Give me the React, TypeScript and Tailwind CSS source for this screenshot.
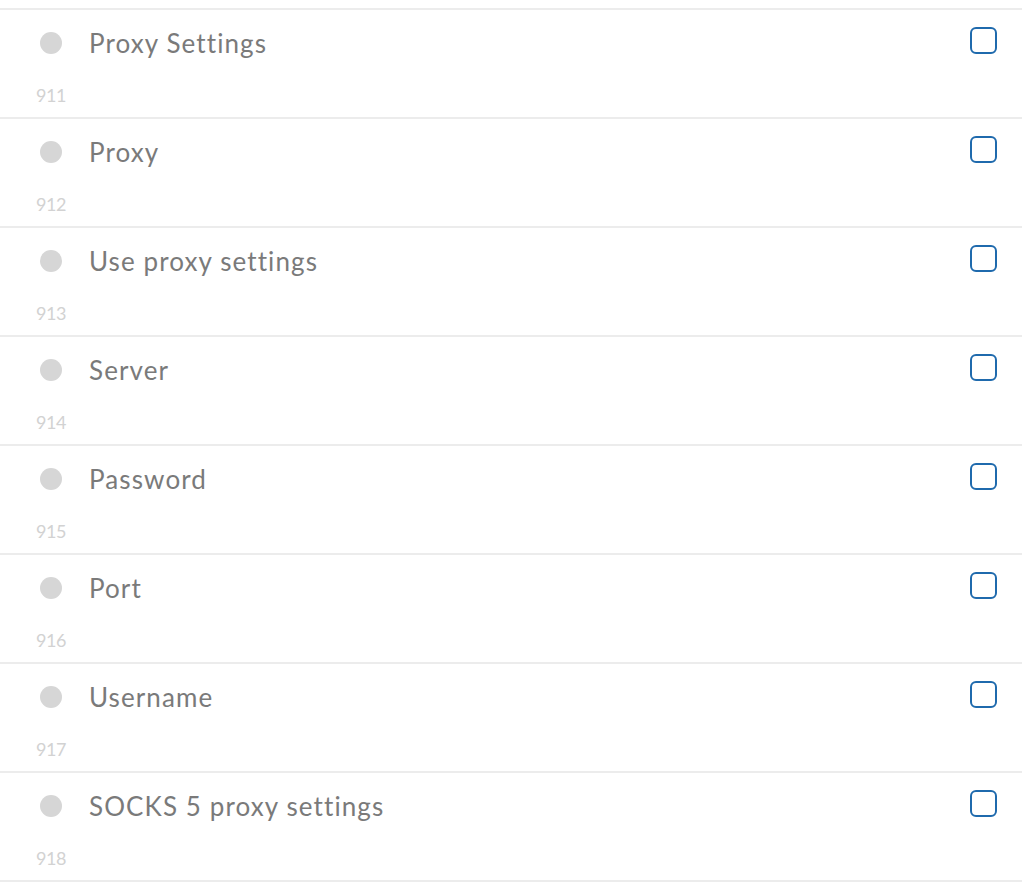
import React from 'react';

const items = [
  { id: 911, label: 'Proxy Settings' },
  { id: 912, label: 'Proxy' },
  { id: 913, label: 'Use proxy settings' },
  { id: 914, label: 'Server' },
  { id: 915, label: 'Password' },
  { id: 916, label: 'Port' },
  { id: 917, label: 'Username' },
  { id: 918, label: 'SOCKS 5 proxy settings' },
];

const Row: React.FC<{ id: number; label: string }> = ({ id, label }) => (
  <div className="h-[109px] border-b-2 border-[#ececec] pt-[17px]">
    <div className="flex items-start pl-10 pr-[25px]">
      <span className="mt-[5px] h-[22px] w-[22px] shrink-0 rounded-full bg-[#d6d6d6]" />
      <span className="ml-[27px] flex-1 text-[26px] leading-[32px] tracking-[1.1px] text-[#7a7a7a]">{label}</span>
      <span className="h-[27px] w-[27px] shrink-0 rounded-[6px] border-2 border-[#1f6aad] bg-white" />
    </div>
    <div className="mt-[26px] pl-9 text-[18px] leading-[20px] tracking-[-0.5px] text-[#d2d2d2]">{id}</div>
  </div>
);

export default function App() {
  return (
    <div className="min-h-screen bg-white pt-2 font-['Lato','Open_Sans',sans-serif]">
      <div className="border-t-2 border-[#ececec]">
        {items.map((it) => (
          <Row key={it.id} id={it.id} label={it.label} />
        ))}
      </div>
    </div>
  );
}
